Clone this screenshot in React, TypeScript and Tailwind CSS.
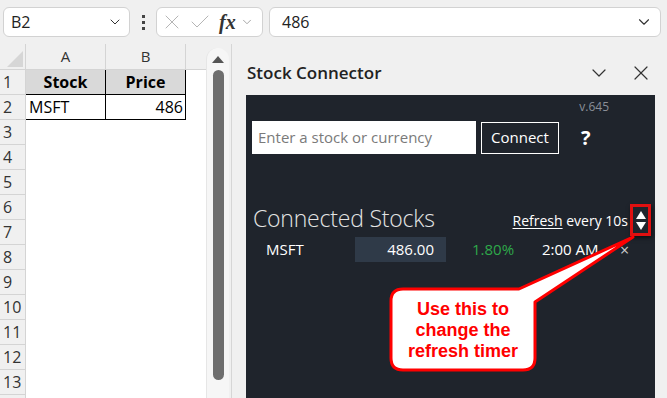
import { ChevronDown, X, Check } from "lucide-react";

const rows = [1, 2, 3, 4, 5, 6, 7, 8, 9, 10, 11, 12, 13];

function Sheet() {
  return (
    <div className="flex w-[232px] h-full">
      <div className="w-[206px] flex flex-col bg-white">
        {/* column headers */}
        <div className="flex h-[26px] shrink-0 bg-[#f0f0f0] border-b border-[#d4d4d4]">
          <div className="w-[26px] border-r border-[#d4d4d4] relative">
            <div className="absolute right-[2px] bottom-[2px] w-0 h-0 border-l-[16px] border-l-transparent border-b-[16px] border-b-[#d6d6d6]" />
          </div>
          <div className="w-[80px] border-r border-[#d4d4d4] flex items-center justify-center text-[15px] text-[#333]">A</div>
          <div className="w-[80px] border-r border-[#d4d4d4] flex items-center justify-center text-[15px] text-[#333]">B</div>
          <div className="flex-1" />
        </div>
        {rows.map((r) => (
          <div key={r} className="flex h-[25px] shrink-0">
            <div className="w-[26px] bg-[#f0f0f0] border-r border-b border-[#d4d4d4] flex items-center pl-[3px] text-[16px] text-[#333]">
              {r}
            </div>
            {r === 1 && (
              <>
                <div className="w-[80px] bg-[#d9d9d9] border-r border-b border-black flex items-center justify-center font-bold text-[16px] text-black">Stock</div>
                <div className="w-[80px] bg-[#d9d9d9] border-r border-b border-black flex items-center justify-center font-bold text-[16px] text-black">Price</div>
              </>
            )}
            {r === 2 && (
              <>
                <div className="w-[80px] border-r border-b border-black flex items-center pl-[3px] text-[16px] text-black">MSFT</div>
                <div className="w-[80px] border-r border-b border-black flex items-center justify-end pr-[2px] text-[16px] text-black">486</div>
              </>
            )}
          </div>
        ))}
        <div className="flex flex-1">
          <div className="w-[26px] bg-[#f0f0f0] border-r border-[#d4d4d4]" />
        </div>
      </div>
      {/* vertical scrollbar */}
      <div className="w-[26px] flex bg-[#f0f0f0]">
        <div className="w-[23px] mt-[4px] bg-[#f6f6f6] rounded-t-full border-l border-[#e6e6e6] flex flex-col items-center pt-[8px]">
          <div className="w-0 h-0 border-l-[6px] border-l-transparent border-r-[6px] border-r-transparent border-b-[7px] border-b-[#555]" />
          <div className="w-[11px] h-[310px] mt-[7px] rounded-full bg-[#6e6e6e]" />
        </div>
        <div className="w-[3px] border-r border-[#d6d6d6]" />
      </div>
    </div>
  );
}

function TopBar() {
  return (
    <div className="flex items-start h-[44px] shrink-0 pt-[7px] pl-[3px] gap-[6px]">
      <div className="w-[127px] h-[30px] bg-white border border-[#d2d2d2] rounded-[6px] flex items-center justify-between pl-[7px] pr-[6px]">
        <span className="text-[16px] text-[#222]">B2</span>
        <ChevronDown size={16} strokeWidth={1.5} className="text-[#333]" />
      </div>
      <div className="w-[14px] h-[30px] flex flex-col items-center justify-center gap-[3px]">
        <div className="w-[3px] h-[3px] bg-[#444]" />
        <div className="w-[3px] h-[3px] bg-[#444]" />
        <div className="w-[3px] h-[3px] bg-[#444]" />
      </div>
      <div className="w-[107px] h-[30px] bg-white border border-[#d2d2d2] rounded-[6px] flex items-center pl-[3px] gap-[4px]">
        <X size={24} strokeWidth={1} className="text-[#b5b5b5]" />
        <Check size={24} strokeWidth={1} className="text-[#b5b5b5]" />
        <span className="italic font-bold text-[20px] text-[#333] leading-none ml-[3px]" style={{ fontFamily: '"Liberation Serif", serif' }}>
          fx
        </span>
        <ChevronDown size={14} strokeWidth={1.5} className="text-[#999]" />
      </div>
      <div className="w-[392px] h-[30px] bg-white border border-[#d2d2d2] rounded-[6px] flex items-center justify-between pl-[12px] pr-[7px]">
        <span className="text-[16px] text-[#222]">486</span>
        <ChevronDown size={18} strokeWidth={1.5} className="text-[#333]" />
      </div>
    </div>
  );
}

function Panel() {
  return (
    <div className="flex-1 flex flex-col pl-[14px] pr-[12px]">
      <div className="h-[51px] flex items-center justify-between pt-[7px] pl-[1px]">
        <span className="text-[17px] font-semibold text-[#222]">Stock Connector</span>
        <div className="flex items-center gap-[18px] pr-[2px]">
          <ChevronDown size={24} strokeWidth={1.2} className="text-[#333]" />
          <X size={24} strokeWidth={1.2} className="text-[#333]" />
        </div>
      </div>
      <div className="flex-1 bg-[#1f242c] flex flex-col">
        <div className="h-[26px] flex justify-end pr-[46px] pt-[3px] text-[12px] text-[#8a8f98]">v.645</div>
        <div className="flex items-center pl-[6px]">
          <div className="w-[224px] h-[33px] bg-white flex items-center pl-[6px] text-[15px] text-[#7a7a7a]">
            Enter a stock or currency
          </div>
          <div className="ml-[5px] w-[78px] h-[32px] border border-white flex items-center justify-center text-[15px] text-white">
            Connect
          </div>
          <span className="ml-[22px] text-[20px] font-bold text-white">?</span>
        </div>
        <div className="flex items-center mt-[50px] pl-[7px] h-[32px]">
          <span className="text-[23px] font-light text-[#e4e4e4] tracking-[-0.2px] -mt-[3px]">Connected Stocks</span>
          <span className="ml-auto text-[14px] text-white">
            <span className="underline underline-offset-2">Refresh</span> every 10s
          </span>
          <div className="ml-[2px] mr-[4px] w-[21px] h-[32px] border-[3px] border-[#e01010] flex flex-col items-center justify-center gap-[3px] shadow-[1px_2px_4px_rgba(0,0,0,0.6)]">
            <div className="w-0 h-0 border-l-[5px] border-l-transparent border-r-[5px] border-r-transparent border-b-[8px] border-b-white" />
            <div className="w-0 h-0 border-l-[5px] border-l-transparent border-r-[5px] border-r-transparent border-t-[8px] border-t-white" />
          </div>
        </div>
        <div className="flex items-center h-[25px] mt-[1px] pl-[20px] text-[15px] text-white">
          <span className="w-[89px]">MSFT</span>
          <span className="w-[91px] h-[25px] bg-[#2f3a48] flex items-center justify-end pr-[12px]">486.00</span>
          <span className="ml-[26px] w-[70px] text-[#2ea84a]">1.80%</span>
          <span className="w-[78px]">2:00 AM</span>
          <span className="text-[#ccc] text-[16px]">×</span>
        </div>
      </div>
    </div>
  );
}

export default function App() {
  return (
    <div
      className="relative w-[667px] h-[398px] overflow-hidden bg-[#f0f0f0] flex flex-col"
      style={{ fontFamily: '"Open Sans", "Noto Sans", sans-serif' }}
    >
      <TopBar />
      <div className="flex flex-1 min-h-0">
        <Sheet />
        <Panel />
      </div>
      {/* callout */}
      <svg className="absolute left-0 top-0 pointer-events-none" width="667" height="398">
        <path
          d="M403 289 H519 L633 237 L535 302 V358 Q535 370 523 370 H403 Q391 370 391 358 V301 Q391 289 403 289 Z"
          fill="white"
          stroke="#ff0000"
          strokeWidth="3"
          strokeLinejoin="round"
        />
      </svg>
      <div
        className="absolute left-[391px] top-[299px] w-[144px] flex flex-col items-center text-[18px] font-bold text-[#ff0000] leading-[21px]"
        style={{ fontFamily: '"Liberation Sans", Arial, sans-serif' }}
      >
        <span>Use this to</span>
        <span>change the</span>
        <span>refresh timer</span>
      </div>
    </div>
  );
}
